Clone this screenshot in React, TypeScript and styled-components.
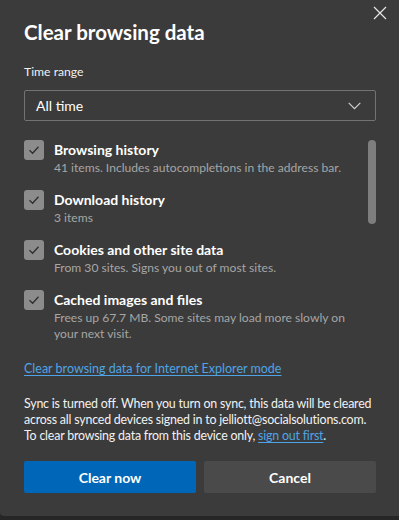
import React from "react";
import styled, { createGlobalStyle } from "styled-components";

const Global = createGlobalStyle`
  html, body { margin: 0; padding: 0; background: #262626; }
  body { font-family: Lato, "Noto Sans", sans-serif; }
  * { box-sizing: border-box; }
`;

const Dialog = styled.div`
  position: relative;
  width: 399px;
  height: 516px;
  background: #3b3b3b;
  border-bottom-left-radius: 4px;
  padding: 18px 23px 0 24px;
  color: #ffffff;
  display: flex;
  flex-direction: column;
  & > * { flex-shrink: 0; }
`;

const Close = styled.button`
  position: absolute;
  top: 4px;
  right: 10px;
  width: 18px;
  height: 18px;
  padding: 0;
  border: none;
  background: transparent;
  display: flex;
  align-items: center;
  justify-content: center;
`;

const Title = styled.h1`
  margin: 0;
  font-size: 20.5px;
  font-weight: 700;
  line-height: 28px;
`;

const Label = styled.div`
  margin-top: 17px;
  font-size: 12.2px;
  line-height: 18px;
  color: #f0f0f0;
`;

const Select = styled.div`
  margin-top: 9px;
  height: 31px;
  border: 1px solid #737373;
  border-radius: 2px;
  display: flex;
  align-items: center;
  justify-content: space-between;
  padding: 0 14px 0 11px;
  font-size: 14px;
`;

const ListArea = styled.div`
  margin-top: 19px;
  display: flex;
  gap: 8px;
`;

const List = styled.div`
  flex: 1;
  display: flex;
  flex-direction: column;
  gap: 14px;
`;

const Item = styled.div`
  display: flex;
  gap: 10px;
  align-items: flex-start;
`;

const Box = styled.div`
  flex: none;
  width: 20px;
  height: 20px;
  border-radius: 3px;
  background: #8c8c8c;
  display: flex;
  align-items: center;
  justify-content: center;
`;

const ItemText = styled.div`
  display: flex;
  flex-direction: column;
`;

const ItemTitle = styled.div`
  font-size: 14px;
  font-weight: 700;
  line-height: 20px;
  color: #ffffff;
`;

const ItemSub = styled.div`
  font-size: 12.1px;
  line-height: 16px;
  color: #a6a6a6;
  max-width: 296px;
`;

const Scrollbar = styled.div`
  flex: none;
  width: 8px;
  height: 84px;
  border-radius: 4px;
  background: #7e7e7e;
`;

const IELink = styled.a`
  margin-top: 18px;
  color: #4ea4e6;
  font-size: 12.5px;
  line-height: 18px;
  text-decoration: underline;
  text-underline-offset: 2px;
  align-self: flex-start;
`;

const SyncText = styled.p`
  margin: 18px 0 0;
  font-size: 12.4px;
  letter-spacing: -0.2px;
  line-height: 16px;
  color: #f2f2f2;
  white-space: nowrap;
`;

const InlineLink = styled.a`
  color: #4ea4e6;
  text-decoration: underline;
  text-underline-offset: 2px;
`;

const Buttons = styled.div`
  margin-top: 17px;
  display: grid;
  grid-template-columns: 1fr 1fr;
  gap: 8px;
`;

const Button = styled.button<{ $primary?: boolean }>`
  height: 32px;
  border: none;
  border-radius: 2px;
  font-family: inherit;
  font-size: 14px;
  font-weight: 700;
  color: #ffffff;
  background: ${(p) => (p.$primary ? "#0067b8" : "#4a4a4a")};
`;

const Check = () => (
  <svg width="14" height="14" viewBox="0 0 14 14">
    <path d="M2.5 7.2 L5.6 10.2 L11.5 3.8" fill="none" stroke="#2e2e2e" strokeWidth="1.3" />
  </svg>
);

const items = [
  { t: "Browsing history", s: "41 items. Includes autocompletions in the address bar." },
  { t: "Download history", s: "3 items" },
  { t: "Cookies and other site data", s: "From 30 sites. Signs you out of most sites." },
  { t: "Cached images and files", s: "Frees up 67.7 MB. Some sites may load more slowly on your next visit." },
];

export default function App() {
  return (
    <>
      <Global />
      <Dialog>
        <Close aria-label="Close">
          <svg width="14" height="14" viewBox="0 0 14 14">
            <path d="M1 1 L13 13 M13 1 L1 13" stroke="#e6e6e6" strokeWidth="1.2" />
          </svg>
        </Close>
        <Title>Clear browsing data</Title>
        <Label>Time range</Label>
        <Select>
          <span>All time</span>
          <svg width="13" height="8" viewBox="0 0 13 8">
            <path d="M0.7 0.8 L6.5 6.6 L12.3 0.8" fill="none" stroke="#d0d0d0" strokeWidth="1.2" />
          </svg>
        </Select>
        <ListArea>
          <List>
            {items.map((it) => (
              <Item key={it.t}>
                <Box>
                  <Check />
                </Box>
                <ItemText>
                  <ItemTitle>{it.t}</ItemTitle>
                  <ItemSub>{it.s}</ItemSub>
                </ItemText>
              </Item>
            ))}
          </List>
          <Scrollbar />
        </ListArea>
        <IELink href="#">Clear browsing data for Internet Explorer mode</IELink>
        <SyncText>
          Sync is turned off. When you turn on sync, this data will be cleared
          <br />
          across all synced devices signed in to jelliott@socialsolutions.com.
          <br />
          To clear browsing data from this device only, <InlineLink href="#">sign out first</InlineLink>.
        </SyncText>
        <Buttons>
          <Button $primary>Clear now</Button>
          <Button>Cancel</Button>
        </Buttons>
      </Dialog>
    </>
  );
}
